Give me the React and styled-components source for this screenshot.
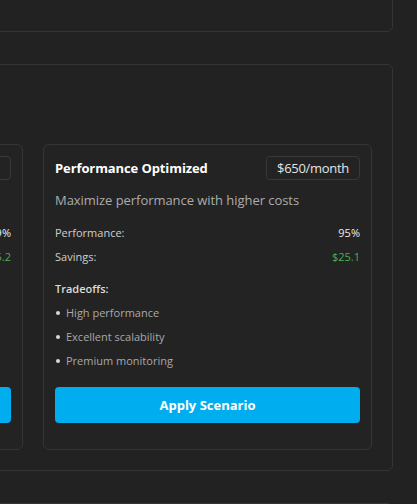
import React from "react";
import styled, { createGlobalStyle } from "styled-components";

const GlobalStyle = createGlobalStyle`
  html, body {
    margin: 0;
    padding: 0;
    background: #222222;
    overflow: hidden;
  }
  body {
    font-family: "Open Sans", "Noto Sans", sans-serif;
    color: #e6e6e6;
  }
`;

const Page = styled.div`
  display: flex;
  flex-direction: column;
  align-items: flex-end;
  gap: 32px;
  padding-right: 24px;
  margin-top: -68px;
`;

const Panel = styled.section`
  width: 720px;
  box-sizing: border-box;
  border: 1px solid #353535;
  border-radius: 6px;
  background: #222222;
  min-height: ${(p) => p.$minHeight || 0}px;
  padding: 20px;
`;

const PanelHeader = styled.div`
  height: 35px;
  margin-bottom: 24px;
`;

const ScenarioGrid = styled.div`
  display: grid;
  grid-template-columns: 329px 329px;
  justify-content: end;
  gap: 20px;
`;

const ScenarioCard = styled.article`
  box-sizing: border-box;
  border: 1px solid #353535;
  border-radius: 6px;
  background: #232323;
  padding: 11px 11px 26px;
  display: flex;
  flex-direction: column;
`;

const CardHead = styled.div`
  display: flex;
  align-items: center;
  justify-content: space-between;
  height: 24px;
`;

const Title = styled.h3`
  margin: 0;
  font-size: 13px;
  font-weight: 700;
  letter-spacing: -0.1px;
  color: #ffffff;
`;

const Price = styled.span`
  box-sizing: border-box;
  height: 24px;
  display: inline-flex;
  align-items: center;
  padding: 0 10px;
  border: 1px solid #383838;
  border-radius: 4px;
  font-size: 13px;
  letter-spacing: -0.3px;
  color: #e4e4e4;
`;

const Description = styled.p`
  margin: 10px 0 0;
  font-size: 13px;
  line-height: 20px;
  letter-spacing: -0.05px;
  color: #acacac;
`;

const Stats = styled.div`
  display: flex;
  flex-direction: column;
  gap: 8px;
  margin-top: 15px;
`;

const StatRow = styled.div`
  display: flex;
  justify-content: space-between;
  font-size: 11px;
  line-height: 16px;
  color: #cfcfcf;
`;

const StatValue = styled.span`
  color: ${(p) => (p.$positive ? "#4caf50" : "#ececec")};
`;

const TradeoffsLabel = styled.div`
  margin-top: 16px;
  font-size: 11px;
  line-height: 16px;
  font-weight: 600;
  color: #dcdcdc;
`;

const TradeoffList = styled.ul`
  list-style: none;
  margin: 8px 0 0;
  padding: 0;
  display: flex;
  flex-direction: column;
  gap: 8px;
`;

const TradeoffItem = styled.li`
  display: flex;
  align-items: center;
  gap: 6px;
  font-size: 11px;
  line-height: 16px;
  color: #a9a9a9;
  &::before {
    content: "";
    width: 4px;
    height: 4px;
    margin-left: 1px;
    border-radius: 50%;
    background: #d8d8d8;
  }
`;

const ApplyButton = styled.button`
  margin-top: 18px;
  height: 36px;
  border: none;
  border-radius: 4px;
  background: #00aeef;
  color: #ffffff;
  font-family: inherit;
  font-size: 13px;
  font-weight: 700;
  cursor: pointer;
`;

const scenarios = [
  {
    title: "Balanced Approach",
    price: "$450/month",
    description: "Balance cost and performance",
    performance: "79%",
    savings: "$75.2",
    tradeoffs: ["Moderate performance", "Good scalability", "Standard monitoring"],
  },
  {
    title: "Performance Optimized",
    price: "$650/month",
    description: "Maximize performance with higher costs",
    performance: "95%",
    savings: "$25.1",
    tradeoffs: ["High performance", "Excellent scalability", "Premium monitoring"],
  },
];

function Scenario({ s }) {
  return (
    <ScenarioCard>
      <CardHead>
        <Title>{s.title}</Title>
        <Price>{s.price}</Price>
      </CardHead>
      <Description>{s.description}</Description>
      <Stats>
        <StatRow>
          <span>Performance:</span>
          <StatValue>{s.performance}</StatValue>
        </StatRow>
        <StatRow>
          <span>Savings:</span>
          <StatValue $positive>{s.savings}</StatValue>
        </StatRow>
      </Stats>
      <TradeoffsLabel>Tradeoffs:</TradeoffsLabel>
      <TradeoffList>
        {s.tradeoffs.map((t) => (
          <TradeoffItem key={t}>{t}</TradeoffItem>
        ))}
      </TradeoffList>
      <ApplyButton>Apply Scenario</ApplyButton>
    </ScenarioCard>
  );
}

export default function App() {
  return (
    <>
      <GlobalStyle />
      <Page>
        <Panel $minHeight={100} />
        <Panel>
          <PanelHeader />
          <ScenarioGrid>
            {scenarios.map((s) => (
              <Scenario key={s.title} s={s} />
            ))}
          </ScenarioGrid>
        </Panel>
        <Panel $minHeight={120} />
      </Page>
    </>
  );
}
